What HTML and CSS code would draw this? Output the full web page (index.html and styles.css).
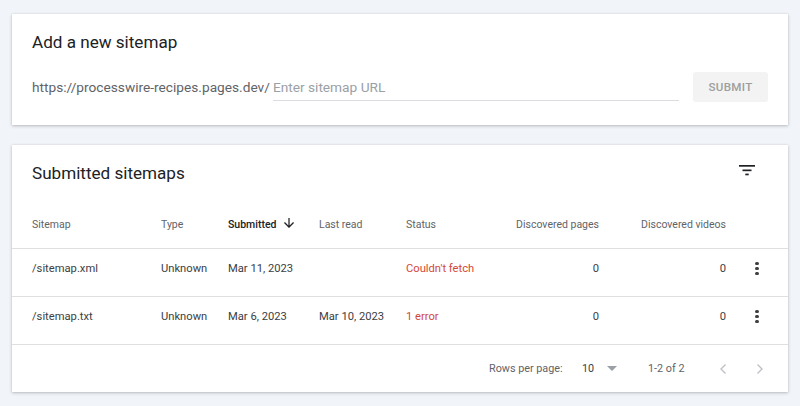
FILE: index.html
```html
<!DOCTYPE html>
<html>
<head>
<meta charset="utf-8">
<link rel="stylesheet" href="styles.css">
</head>
<body>
<div class="page">
  <section class="card add-card">
    <h2 class="card-title">Add a new sitemap</h2>
    <div class="add-row">
      <span class="prefix">https://processwire-recipes.pages.dev/</span>
      <div class="url-field"><span class="placeholder">Enter sitemap URL</span></div>
      <div class="submit-btn">SUBMIT</div>
    </div>
  </section>

  <section class="card list-card">
    <div class="list-head">
      <h2 class="card-title">Submitted sitemaps</h2>
      <svg class="filter-icon" width="18" height="14" viewBox="0 0 18 14">
        <rect x="0" y="1" width="16" height="1.7" fill="#202124"/>
        <rect x="3.5" y="5.5" width="9" height="1.7" fill="#202124"/>
        <rect x="6.3" y="9.6" width="3.4" height="1.7" fill="#202124"/>
      </svg>
    </div>
    <div class="trow thead">
      <div class="c">Sitemap</div>
      <div class="c">Type</div>
      <div class="c sorted">Submitted
        <svg class="sort-arrow" width="10" height="10" viewBox="4 4 16 16"><path d="M20 12l-1.41-1.41L13 16.17V4h-2v12.17l-5.58-5.59L4 12l8 8 8-8z" fill="#202124"/></svg>
      </div>
      <div class="c">Last read</div>
      <div class="c">Status</div>
      <div class="c num">Discovered pages</div>
      <div class="c num">Discovered videos</div>
      <div class="c"></div>
    </div>
    <div class="trow tbody">
      <div class="c">/sitemap.xml</div>
      <div class="c">Unknown</div>
      <div class="c">Mar 11, 2023</div>
      <div class="c"></div>
      <div class="c err">Couldn't fetch</div>
      <div class="c num">0</div>
      <div class="c num">0</div>
      <div class="c kebab-cell"><span class="kebab"><i></i><i></i><i></i></span></div>
    </div>
    <div class="trow tbody">
      <div class="c">/sitemap.txt</div>
      <div class="c">Unknown</div>
      <div class="c">Mar 6, 2023</div>
      <div class="c">Mar 10, 2023</div>
      <div class="c err">1 error</div>
      <div class="c num">0</div>
      <div class="c num">0</div>
      <div class="c kebab-cell"><span class="kebab"><i></i><i></i><i></i></span></div>
    </div>
    <div class="tfoot">
      <span class="rpp">Rows per page:</span>
      <span class="rpp-val">10</span>
      <svg class="caret" width="10" height="5" viewBox="0 0 10 5"><path d="M0 0h10L5 5z" fill="#9aa0a6"/></svg>
      <span class="range">1-2 of 2</span>
      <svg class="chev prev" width="10" height="12" viewBox="0 0 10 12"><path d="M7.5 1.5L3 6l4.5 4.5" fill="none" stroke="#bdc1c6" stroke-width="1.4"/></svg>
      <svg class="chev next" width="10" height="12" viewBox="0 0 10 12"><path d="M2.5 1.5L7 6l-4.5 4.5" fill="none" stroke="#bdc1c6" stroke-width="1.4"/></svg>
    </div>
  </section>
</div>
</body>
</html>
```
FILE: styles.css
```css
* { box-sizing: border-box; }
html, body { margin: 0; padding: 0; }
body {
  background: #f1f4f9;
  font-family: Roboto, "Liberation Sans", Arial, sans-serif;
  color: #202124;
  width: 800px;
  height: 406px;
  overflow: hidden;
}
.page {
  padding: 14px 12px 0 12px;
  display: flex;
  flex-direction: column;
  gap: 20px;
}
.card {
  background: #fff;
  box-shadow: 0 1px 3px rgba(60, 64, 67, 0.3), 0 0 1px rgba(60, 64, 67, 0.15);
}
.card-title {
  margin: 0;
  font-size: 17.1px;
  font-weight: 400;
  line-height: 24px;
  color: #202124;
}
.add-card {
  height: 111px;
  padding: 16px 20px 23px 20px;
}
.add-row {
  margin-top: 18px;
  height: 30px;
  display: flex;
  align-items: center;
}
.prefix {
  font-size: 13.7px;
  color: #5f6368;
  line-height: 20px;
  margin-right: 3px;
}
.url-field {
  flex: 1;
  height: 28px;
  border-bottom: 1px solid #dadce0;
  display: flex;
  align-items: center;
  padding-top: 1px;
}
.placeholder {
  font-size: 13.7px;
  color: #9aa0a6;
}
.submit-btn {
  margin-left: 14px;
  width: 75px;
  height: 30px;
  background: #f3f3f3;
  border-radius: 3px;
  color: #9e9e9e;
  font-size: 11.6px;
  font-weight: 500;
  letter-spacing: 0.3px;
  display: flex;
  align-items: center;
  justify-content: center;
}
.list-card {
  height: 247px;
}
.list-head {
  height: 56px;
  padding: 16px 20px 16px 20px;
  display: flex;
  align-items: center;
  justify-content: space-between;
}
.filter-icon {
  margin-right: 11px;
  margin-top: -4px;
}
.trow {
  display: grid;
  grid-template-columns: 129px 67px 91px 87px 80px 113px 127px 62px;
  padding-left: 20px;
  height: 48px;
  border-bottom: 1px solid #e0e0e0;
  align-items: center;
}
.thead {
  font-size: 10.5px;
  color: #5f6368;
}
.thead .sorted {
  color: #202124;
  font-weight: 500;
  display: flex;
  align-items: center;
}
.sort-arrow {
  margin-left: 8px;
  margin-top: -3px;
}
.tbody {
  font-size: 11.2px;
  color: #3c4043;
  padding-bottom: 8px;
}
.c { white-space: nowrap; }
.num { text-align: right; }
.err { color: #d5483a; }
.kebab-cell {
  display: flex;
  justify-content: center;
}
.kebab {
  display: flex;
  flex-direction: column;
  gap: 2.2px;
}
.kebab i {
  display: block;
  width: 3.2px;
  height: 3.2px;
  border-radius: 50%;
  background: #3c4043;
}
.tfoot {
  height: 47px;
  display: flex;
  align-items: center;
  font-size: 10.8px;
  color: #5f6368;
  padding-left: 477px;
}
.rpp { width: 93px; }
.rpp-val { width: 25px; color: #3c4043; }
.caret { margin-right: 31px; }
.range { width: 70px; }
.chev.next { margin-left: 27px; }
```
